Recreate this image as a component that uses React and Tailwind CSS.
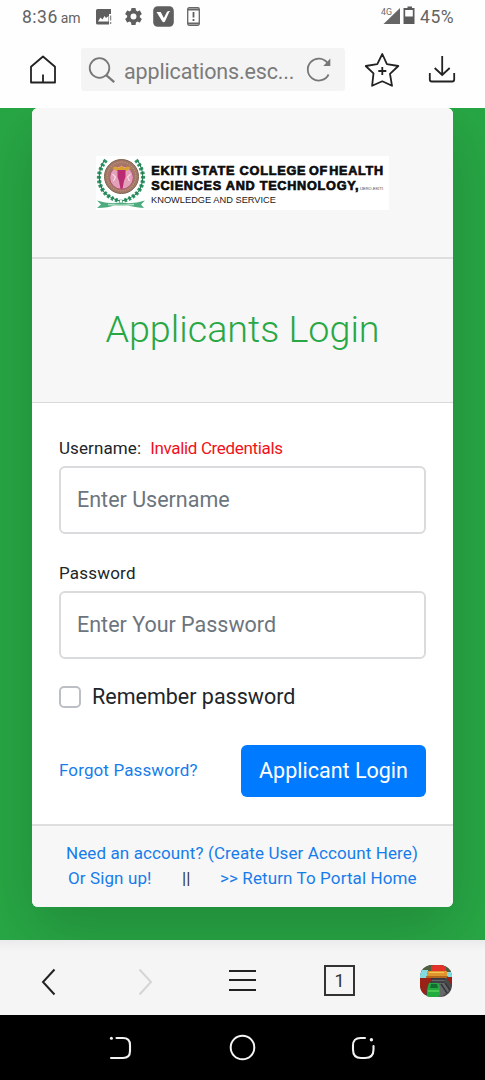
import React from "react";

function StatusBar() {
  return (
    <div className="flex h-9 items-start bg-[#fefefe] pl-[22px] text-[#636363]">
      <div className="mt-[7px] flex w-[74px] items-baseline leading-5">
        <span className="text-[17.5px] tracking-[0.5px]">8:36</span>
        <span className="ml-[3px] text-[14px]">am</span>
      </div>
      <svg className="mt-[9px] h-4 w-4" viewBox="0 0 16 16">
        <path d="M1.5 0H15v5h-2v10.5H1.5Q0 15.5 0 14V1.5Q0 0 1.5 0Z" fill="#5f5f5f" />
        <path d="M2 12.5 4.5 8.5l2 2L8.5 7l1.5 2 2.5-2v5.5Z" fill="#fff" />
        <path d="M14.6 6.5v5M14.6 13v2" stroke="#8a8a8a" strokeWidth="1.3" />
      </svg>
      <svg className="mt-[8px] ml-[13px] h-[17px] w-[17px]" viewBox="2 2 20 20" fill="#5f5f5f">
        <path d="M19.43 12.98c.04-.32.07-.64.07-.98s-.03-.66-.07-.98l2.11-1.65a.5.5 0 0 0 .12-.64l-2-3.46a.5.5 0 0 0-.61-.22l-2.49 1a7.3 7.3 0 0 0-1.69-.98l-.38-2.65A.49.49 0 0 0 14 2h-4a.49.49 0 0 0-.49.42l-.38 2.65c-.61.25-1.17.59-1.69.98l-2.49-1a.5.5 0 0 0-.61.22l-2 3.46a.5.5 0 0 0 .12.64l2.11 1.65a7.9 7.9 0 0 0 0 1.96l-2.11 1.65a.5.5 0 0 0-.12.64l2 3.46c.12.22.39.3.61.22l2.49-1c.52.4 1.08.73 1.69.98l.38 2.65c.03.24.24.42.49.42h4c.25 0 .46-.18.49-.42l.38-2.65a7.3 7.3 0 0 0 1.69-.98l2.49 1c.23.09.49 0 .61-.22l2-3.46a.5.5 0 0 0-.12-.64ZM12 15.5a3.5 3.5 0 1 1 0-7 3.5 3.5 0 0 1 0 7Z" />
      </svg>
      <svg className="mt-[6px] ml-[11px] h-[21px] w-[21px]" viewBox="0 0 21 21">
        <rect x="0.2" y="0.2" width="20.6" height="20.6" rx="4.5" fill="#5f5f5f" />
        <path d="M3.5 6h4.2l3.2 6 3-6c.5-.9 1.5-1 3.6-1-1 .5-1.2 1-1.7 2l-3.7 8.3q-.5 1-1.4 1-.9 0-1.5-1Z" fill="#fff" />
      </svg>
      <svg className="mt-[7px] ml-[13px] h-[19px] w-[13px]" viewBox="0 0 13 19">
        <rect x="0.7" y="0.7" width="11.6" height="17.6" rx="1.5" fill="none" stroke="#666" strokeWidth="1.3" />
        <path d="M1 2.4h11M1 16.6h11" stroke="#666" strokeWidth="2" />
        <path d="M6.5 5v5.5M6.5 12v2" stroke="#5f5f5f" strokeWidth="1.8" />
      </svg>
      <svg className="mt-[6px] ml-[181px] h-[20px] w-[35px]" viewBox="0 0 35 20">
        <text x="0" y="9" fontSize="9" fill="#6c6c6c" textLength="11" lengthAdjust="spacingAndGlyphs">4G</text>
        <path d="M2.5 18 19 2v16Z" fill="#666" />
        <path d="M26.5 .5h4.5V2h2.5v16h-11V2h4Z" fill="#5b5b5b" />
        <rect x="24.2" y="4" width="7.6" height="6.5" fill="#fff" />
      </svg>
      <span className="mt-[7px] ml-[4px] text-[17.5px] leading-5 tracking-[0.6px]">45%</span>
    </div>
  );
}

function Toolbar() {
  return (
    <div className="flex h-[72px] items-start bg-[#fefefe] pt-3 pl-[29px]">
      <svg className="mt-[7px] h-[29px] w-[28px] shrink-0" viewBox="0 0 28 29" fill="none" stroke="#222" strokeWidth="1.8" strokeLinejoin="round">
        <path d="M2 27.5V11.8L14 1.5l12 10.3v15.7ZM14 19.5v8" />
      </svg>
      <div className="ml-6 flex h-[43px] w-[264px] shrink-0 items-center rounded-[3px] bg-[#f4f4f4] text-[#7b7b7b]">
        <svg className="ml-[7px] h-7 w-7 shrink-0" viewBox="0 0 28 28" fill="none" stroke="#777" strokeWidth="1.8">
          <circle cx="11.5" cy="12" r="9.8" />
          <path d="m18.2 19.2 8 7" strokeWidth="2.2" />
        </svg>
        <span className="mt-[4px] ml-[8px] w-[172px] text-[21.5px] leading-7 tracking-[-0.15px] whitespace-nowrap">applications.esc...</span>
        <svg className="ml-[10px] h-[26px] w-[26px] shrink-0" viewBox="0 0 26 26" fill="none" stroke="#777" strokeWidth="1.8">
          <path d="M21.6 6A11 11 0 1 0 22.6 17.5" />
          <path d="M24.3 1.5v7.6h-7Z" fill="#777" stroke="none" />
        </svg>
      </div>
      <svg className="mt-[4px] ml-[19px] h-9 w-9 shrink-0" viewBox="0 0 36 36" fill="none" stroke="#222" strokeWidth="1.8" strokeLinejoin="round">
        <path d="m18.3 2 4.6 10.2 11.4 1.8-8.3 7.8 2 12-9.7-4.5-10.2 4.5 1.4-12.4L1.7 14l11.6-1.9Z" />
        <path d="M18.3 15v8M14.3 19h8" />
      </svg>
      <svg className="mt-[7px] ml-[28px] h-7 w-7 shrink-0" viewBox="0 0 28 28" fill="none" stroke="#222" strokeWidth="1.8">
        <path d="M14.2 1v18.5M6.7 13l7.5 7 7.5-7M1.8 18v6.5q0 2 2 2h20.4q2 0 2-2V18" />
      </svg>
    </div>
  );
}

function Logo() {
  return (
    <svg className="h-[54px] w-[293px]" viewBox="0 0 293 54" fontFamily="Liberation Sans, Arial, sans-serif">
      <rect width="293" height="54" fill="#fff" />
      <g fill="none" stroke="#2f9566" strokeWidth="4.2" strokeDasharray="2.6 1.8">
        <path d="M10 4Q-3 21 8 36Q14 43 24 45" />
        <path d="M40 4Q53 21 42 36Q36 43 26 45" />
      </g>
      <g fill="none" stroke="#227c4f" strokeWidth="1.1">
        <path d="M8 5Q-1 20 7 35Q13 42 24 45M42 5Q51 20 43 35Q37 42 26 45" />
      </g>
      <circle cx="25.5" cy="20.5" r="17" fill="#a27767" stroke="#80644c" strokeWidth="1" />
      <circle cx="25.5" cy="20.5" r="14.3" fill="none" stroke="#c29079" strokeWidth="1.2" strokeDasharray="1.3 1.2" />
      <circle cx="25.5" cy="21.5" r="11.8" fill="#e2a0b9" stroke="#b05a70" />
      <path d="M16 12q4-3 7 0l2.5-3 2.5 3q4-3 7 0l-5 3h-9Z" fill="#d6a233" />
      <path d="M21.5 14h8v7l-1.5 4-1.5 8h-2L23 25l-1.5-4Z" fill="#ba2b72" />
      <path d="m16.5 18 3 3-2 4M34.5 18l-3 3 2 4" stroke="#f8dce6" strokeWidth="1.2" fill="none" />
      <path d="M1 44.5q12 4 24 2 12 2 24-2l-4 4 3 3.5q-12-1-17-3-6 1.5-12 0-6 3-18 3l4-3.5Z" fill="#4dab7d" />
      <path d="M12 48.5q13 1.5 26 0" stroke="#b5dec8" strokeWidth="1.5" fill="none" />
      <g fill="#0c0c0c" fontSize="12" fontWeight="700" stroke="#0c0c0c" strokeWidth="0.65" letterSpacing="0.7">
        <text x="55.3" y="18.8" textLength="155" lengthAdjust="spacingAndGlyphs">EKITI STATE COLLEGE</text>
        <text x="213" y="18.8" textLength="19" lengthAdjust="spacingAndGlyphs">OF</text>
        <text x="233.3" y="18.8" textLength="54.5" lengthAdjust="spacingAndGlyphs">HEALTH</text>
        <text x="55.3" y="33.8" textLength="208" lengthAdjust="spacingAndGlyphs">SCIENCES AND TECHNOLOGY,</text>
      </g>
      <text x="264" y="33.5" fontSize="4" fill="#444" textLength="23" lengthAdjust="spacingAndGlyphs">IJERO-EKITI</text>
      <text x="55" y="46.5" fontSize="9.8" fill="#222" textLength="125" lengthAdjust="spacingAndGlyphs">KNOWLEDGE AND SERVICE</text>
    </svg>
  );
}

function LoginCard() {
  return (
    <div className="ml-[32px] h-[799px] w-[421px] overflow-hidden rounded-[6px] bg-white text-[#212529] shadow-[0_22px_65px_rgba(0,0,0,0.175)]">
      <div className="flex h-[151px] items-start justify-center border-b-2 border-[#dedede] bg-[#f7f7f7] pt-[48px]">
        <Logo />
      </div>
      <div className="flex h-[144px] items-center justify-center border-b border-[#d9d9d9] bg-[#f7f7f7]">
        <h3 className="pb-0.5 text-[37.7px] leading-[45px] font-light whitespace-nowrap text-[#28a745]">Applicants Login</h3>
      </div>
      <form className="flex h-[421px] flex-col px-[27px] pt-[32px]" onSubmit={(e) => e.preventDefault()}>
        <label className="h-[31px] text-[17px] leading-[26px] tracking-[0.1px]" htmlFor="user">
          Username:<span className="ml-[9px] tracking-[-0.34px] text-[#f01119]">Invalid Credentials</span>
        </label>
        <input id="user" placeholder="Enter Username" className="h-[68px] w-full rounded-[6px] border-2 border-[#d9dbdd] px-[16px] pb-[2px] text-[21.5px] placeholder:text-[#6c757d]" />
        <label className="mt-[26px] h-[31px] text-[17px] leading-[26px] tracking-[0.2px]" htmlFor="pass">Password</label>
        <input id="pass" placeholder="Enter Your Password" className="h-[68px] w-full rounded-[6px] border-2 border-[#d9dbdd] px-[16px] pb-[2px] text-[21.5px] placeholder:text-[#6c757d]" />
        <label className="mt-[22px] flex h-8 items-center text-[21.5px]">
          <input type="checkbox" className="h-[22px] w-[22px] appearance-none rounded-[5px] border-2 border-[#bcc0c4] bg-white" />
          <span className="ml-[11px]">Remember password</span>
        </label>
        <div className="mt-[32px] flex h-[52px] items-center justify-between">
          <a className="text-[17px] tracking-[0.12px] text-[#177ceb]">Forgot Password?</a>
          <button className="h-[52px] w-[185px] rounded-[6px] bg-[#007bff] text-[21.5px] whitespace-nowrap text-white">Applicant Login</button>
        </div>
      </form>
      <div className="flex h-[83px] flex-col border-t-2 border-[#dedede] bg-[#f7f7f7] pt-[15px] text-[17px] leading-[25px] tracking-[0.11px] whitespace-nowrap text-[#177ceb]">
        <a className="ml-[34px]">Need an account? (Create User Account Here)</a>
        <div className="ml-[36px] flex">
          <a className="w-[114px]">Or Sign up!</a>
          <span className="w-[38px] text-[#333]">||</span>
          <a>&gt;&gt; Return To Portal Home</a>
        </div>
      </div>
    </div>
  );
}

function BrowserNav() {
  return (
    <div className="flex h-[75px] items-center bg-gradient-to-b from-[#ebebed] via-[#f5f5f5] via-15% to-[#f5f5f5] pt-[8px] pl-[41px]">
      <svg className="h-7 w-[15px]" viewBox="0 0 15 28" fill="none" stroke="#222" strokeWidth="2">
        <path d="M13.5 1.5 2 14l11.5 12.5" />
      </svg>
      <svg className="ml-[82px] h-7 w-[15px]" viewBox="0 0 15 28" fill="none" stroke="#d5d5d5" strokeWidth="2">
        <path d="M1.5 1.5 13 14 1.5 26.5" />
      </svg>
      <svg className="mb-1 ml-[76px] h-6 w-[27px]" viewBox="0 0 27 24" fill="none" stroke="#222" strokeWidth="2">
        <path d="M0 3h27M0 12h27M0 22h27" />
      </svg>
      <div className="mb-0.5 ml-[68px] flex h-[31px] w-[31px] items-center justify-center border-2 border-[#333] text-[18px] text-[#333]">1</div>
      <svg className="mb-0.5 ml-[65px] h-8 w-8" viewBox="0 0 32 32">
        <defs>
          <clipPath id="avatar"><rect width="32" height="32" rx="12" /></clipPath>
        </defs>
        <g clipPath="url(#avatar)">
          <rect width="32" height="32" fill="#48494b" />
          <rect width="32" height="7" fill="#4f6040" />
          <path d="M0 5h8v8H0ZM26 7h6v5h-6Z" fill="#82dbe3" />
          <path d="M11 1q8-3 15 1v4H11Z" fill="#e43229" />
          <path d="M7 6h20v7H7Z" fill="#e0952d" />
          <path d="M9 7.5h15" stroke="#f5c856" />
          <path d="M6 12h22" stroke="#a65a1b" strokeWidth="1.5" />
          <path d="M0 13h11v3l-4 5-1 9H0ZM27 12h5v10q-2-6-5-7Z" fill="#992116" />
          <path d="m12 14 12 0 5 12-8 6h-9Z" fill="#66676b" />
          <path d="m11 17 14 0M11 14h14M21 19l6 9M25 18l5 7" stroke="#343539" strokeWidth="1.5" />
          <path d="m9 18 9 0 2 4v8l-4 3H7v-8Z" fill="#20ad3d" />
          <path d="M11 19h6l1 4h-8Z" fill="#166b35" />
          <path d="M8 26h11" stroke="#72e46d" strokeWidth="1.2" />
        </g>
      </svg>
    </div>
  );
}

function SystemNav() {
  return (
    <div className="flex h-[65px] items-center bg-black pl-[109px]">
      <svg className="h-6 w-[23px]" viewBox="0 0 23 24" fill="none" stroke="#f2f2f2" strokeWidth="2.1" strokeLinecap="round">
        <path d="M7.5 2H14q7 0 7 7v6q0 7-7 7H2" />
        <circle cx="2.4" cy="2.2" r="1.5" fill="#f2f2f2" stroke="none" />
      </svg>
      <svg className="ml-[97px] h-[27px] w-[27px]" viewBox="0 0 27 27" fill="none" stroke="#f5f5f5" strokeWidth="2">
        <circle cx="13.5" cy="13.5" r="11.8" />
      </svg>
      <svg className="ml-[95px] h-6 w-6" viewBox="0 0 24 24" fill="none" stroke="#f2f2f2" strokeWidth="2.1" strokeLinecap="round">
        <path d="M14 2H9.5Q2 2 2 9.5v4Q2 22 10 22h4q8.5 0 8.5-8.5V10" />
        <circle cx="20.4" cy="3.8" r="1.7" fill="#f2f2f2" stroke="none" />
      </svg>
    </div>
  );
}

export default function App() {
  return (
    <div className="flex h-[1080px] w-[485px] flex-col overflow-hidden bg-white font-['Roboto',sans-serif]">
      <StatusBar />
      <Toolbar />
      <main className="h-[832px] shrink-0 overflow-hidden bg-[#28a745]">
        <LoginCard />
      </main>
      <BrowserNav />
      <SystemNav />
    </div>
  );
}
